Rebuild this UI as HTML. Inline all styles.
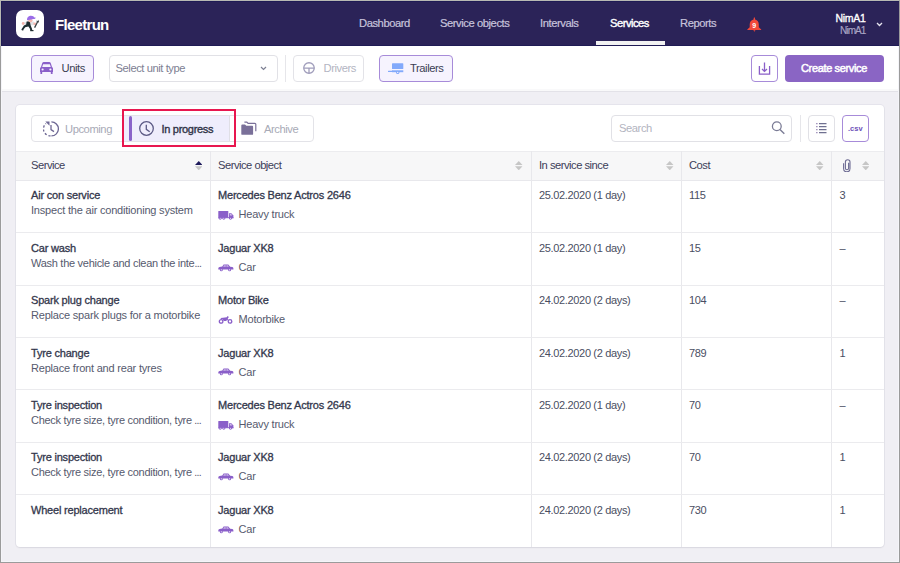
<!DOCTYPE html>
<html><head><meta charset="utf-8">
<style>
*{box-sizing:border-box;margin:0;padding:0}
html,body{width:900px;height:563px;overflow:hidden;background:#f0eff4;font-family:"Liberation Sans",sans-serif;color:#3a3d52}
#frame{position:absolute;left:0;top:0;width:900px;height:563px;border-top:1px solid #b8b9b3;border-left:1px solid #9b9b9b;border-right:1px solid #9b9b9b;border-bottom:1px solid #9b9b9b;z-index:50;pointer-events:none}
#frame2{position:absolute;left:1px;top:46px;width:898px;height:516px;border-left:1px solid #f5f5f9;border-right:1px solid #f5f5f9;border-bottom:1px solid #f5f5f9;z-index:49}
#frame3{position:absolute;left:0;top:0;width:1px;height:46px;background:#b8b8b2;z-index:51}
#hrim{position:absolute;left:1px;top:1px;width:898px;height:45px;border-top:1px solid #1f1b55;border-left:1px solid #1f1b55;border-bottom:1px solid #1f1b55;z-index:2}
.abs{position:absolute}
.t{position:absolute;white-space:nowrap;line-height:14px}
#hdr{position:absolute;left:0;top:0;width:900px;height:46px;background:#2b2358}
#logo{position:absolute;left:16px;top:10px;width:28px;height:28px;border-radius:7px;background:#fff}
#brand{left:55px;top:15.5px;font-size:15px;font-weight:bold;color:#fff;letter-spacing:-0.7px;line-height:18px}
.nav{top:15.8px;font-size:11.2px;color:#c8c3dc;letter-spacing:-0.43px;-webkit-text-stroke:0.2px #c8c3dc}
.nav.act{color:#fff;-webkit-text-stroke:0.4px #fff;letter-spacing:-0.5px}
#uline{position:absolute;left:596px;top:41px;width:69px;height:5px;background:#f2f2f2}
#bar{position:absolute;left:0;top:46px;width:900px;height:46px;background:#fff;border-bottom:1px solid #e3e2e8;box-shadow:inset 0 -2px 0 #f9f9fa}
.btn{position:absolute;height:27px;border:1px solid #e3e3e8;border-radius:4px;background:#fff}
.btn.on{border-color:#a78bd9;background:#f6f3fe}
.lbl{font-size:11.2px;letter-spacing:-0.43px}
#card{position:absolute;left:16px;top:105px;width:868px;height:442px;background:#fff;border-radius:4px;box-shadow:0 0 0 1px rgba(40,30,90,0.05),0 1px 2px rgba(0,0,0,0.06)}
#thead{position:absolute;left:16px;top:150.5px;width:868px;height:30px;background:#f7f7f8;border-top:1px solid #ececef;border-bottom:1px solid #e8e8ec}
.vline{position:absolute;width:1px;background:#e8e8ec}
.rowline{position:absolute;left:16px;width:868px;height:1px;background:#ebebee}
.th{font-size:11.2px;color:#3c4058;letter-spacing:-0.5px}
.nm{font-size:11px;color:#33374c;letter-spacing:-0.2px;-webkit-text-stroke:0.3px #33374c}
.ds{font-size:11px;color:#565a6e;letter-spacing:-0.2px}
.vl{font-size:11px;color:#4a4e62;letter-spacing:-0.34px}
.ico{position:absolute;line-height:0}
.el{letter-spacing:-0.6px;font-size:10.5px}
.sort{position:absolute;width:7.5px;height:9.5px}
</style></head>
<body>
<div id="frame"></div><div id="frame2"></div><div id="frame3"></div><div id="hrim"></div>
<!-- header -->
<div id="hdr">
  <div id="logo">
    <svg width="28" height="28" viewBox="0 0 28 28">
      <path d="M8.2 12.2L17.8 11.4 18.6 15 9.2 16z" fill="#e2e2e5"/>
      <path d="M10.6 11.6L13.8 11.2 14.6 15.2 15.9 18.4 16.3 20.3H14.3L13.8 18.4 12.4 16.6 9.2 17.2 7.3 19.8 5.6 19.3 7.9 15.6 10.2 14.6z" fill="#1f2d2f"/>
      <path d="M14.2 20h3.3v1.2h-3.3z" fill="#1f2d2f"/>
      <path d="M5.4 19l1.5-.3.7 1.6-1.6.3z" fill="#1f2d2f"/>
      <ellipse cx="14.4" cy="10.6" rx="2.2" ry="1.8" fill="#f4b6ad"/>
      <path d="M11 10.2C11 6.8 13.2 5.7 15 5.7 17 5.7 18 6.6 18.4 7.5L19.6 7.4C19.7 8.4 18.7 8.9 17.6 8.9L11.3 10.3z" fill="#9a6ce8"/>
      <circle cx="7.2" cy="13.5" r="1.4" fill="#f4b6ad"/>
      <circle cx="18.7" cy="13.8" r="1.4" fill="#f4b6ad"/>
      <path d="M18.6 17.6L21.4 12.3" stroke="#3a4244" stroke-width="1.3"/>
      <path d="M20.6 12.2L20.8 10.2 21.8 11.2 22.4 9.8 23 11.8 22 13z" fill="#3a4244"/>
    </svg>
  </div>
  <div class="t" id="brand">Fleetrun</div>
  <div class="t nav" style="left:359px">Dashboard</div>
  <div class="t nav" style="left:440px">Service objects</div>
  <div class="t nav" style="left:540px">Intervals</div>
  <div class="t nav act" style="left:610px">Services</div>
  <div class="t nav" style="left:680px">Reports</div>
  <div id="uline"></div>
  <div class="abs" style="left:747px;top:16.8px;width:15px;height:15px"><svg width="15" height="15" viewBox="0 0 15 15"><path d="M6.6 2.4Q6.6 .3 7.3 .3T8.1 2.4Q11.8 3.3 11.8 7.6V10.3L14.2 12.4V13H.3V12.4L2.7 10.3V7.6Q2.7 3.3 6.6 2.4z" fill="#f2483a"/><path d="M6.3 13.2h2.2L7.4 14.8z" fill="#f2483a"/><text x="7.3" y="11.2" font-family="Liberation Sans" font-size="7" font-weight="bold" fill="#fff" text-anchor="middle">9</text></svg></div>
  <div class="t" style="left:835.5px;top:11.2px;font-size:10.5px;color:#fff;letter-spacing:-0.3px;-webkit-text-stroke:0.35px #fff">NimA1</div>
  <div class="t" style="left:840px;top:23.8px;font-size:10px;color:#aaa6c4;letter-spacing:-0.9px;-webkit-text-stroke:0.15px #aaa6c4">NimA1</div>
  <svg class="abs" style="left:876px;top:22px" width="7" height="5" viewBox="0 0 7 5"><path d="M1 1l2.5 2.5L6 1" fill="none" stroke="#e6e4ef" stroke-width="1.3"/></svg>
</div>
<!-- toolbar -->
<div id="bar"></div>
<div class="btn on" style="left:31px;top:55px;width:63px"></div>
<svg class="abs" style="left:40px;top:62px" width="13" height="12" viewBox="0 0 13 12"><path d="M2.2 1.2Q2.6 0 3.8 0h5.4q1.2 0 1.6 1.2L12 5q1 .5 1 1.6V10H0V6.6Q0 5.5 1 5z" fill="#8a5fc9"/><path d="M2.2 5h8.6L9.9 2.2H3.1z" fill="#f4f1fd"/><circle cx="2.6" cy="7.5" r="1.1" fill="#f4f1fd"/><circle cx="10.4" cy="7.5" r="1.1" fill="#f4f1fd"/><rect x="0.4" y="9.5" width="1.8" height="2.5" rx=".5" fill="#8a5fc9"/><rect x="10.8" y="9.5" width="1.8" height="2.5" rx=".5" fill="#8a5fc9"/></svg>
<div class="t lbl" style="left:61.5px;top:61px;color:#3a3d52">Units</div>
<div class="btn" style="left:109px;top:55px;width:169px;border-color:#e1e1e6"></div>
<div class="t lbl" style="left:115.5px;top:61px;color:#7d8093">Select unit type</div>
<svg class="abs" style="left:260px;top:66px" width="7" height="5" viewBox="0 0 7 5"><path d="M1 1l2.5 2.5L6 1" fill="none" stroke="#7d8093" stroke-width="1.2"/></svg>
<div class="abs" style="left:285px;top:55px;width:1px;height:27px;background:#e6e6ea"></div>
<div class="btn" style="left:293px;top:55px;width:71px;border-color:#e3e3e8"></div>
<svg class="abs" style="left:302.5px;top:62.3px" width="12" height="12" viewBox="0 0 12 12"><circle cx="6" cy="6" r="5.25" fill="none" stroke="#a09dbb" stroke-width="1.3"/><path d="M0.8 6.2h10.4M6 6.2v5" fill="none" stroke="#a09dbb" stroke-width="1.3"/></svg>
<div class="t lbl" style="left:323.5px;top:61px;color:#b3b5c2">Drivers</div>
<div class="btn on" style="left:379px;top:55px;width:74px"></div>
<svg class="abs" style="left:387.5px;top:62.8px" width="16" height="12" viewBox="0 0 16 12"><rect x="4" y="0.2" width="11.3" height="5.8" rx=".6" fill="#82a9fb"/><path d="M4 7.3h11.3v1.9H4z" fill="#82a9fb"/><path d="M0.5 8.3h4" stroke="#82a9fb" stroke-width="1.2" stroke-linecap="round"/><circle cx="9.7" cy="9.4" r="1.7" fill="#82a9fb"/><circle cx="9.7" cy="9.4" r=".7" fill="#f6f3fe"/></svg>
<div class="t lbl" style="left:410px;top:61px;color:#3a3d52">Trailers</div>
<div class="btn" style="left:751px;top:55px;width:27px;border-color:#a78bd9"></div>
<svg class="abs" style="left:758px;top:62px" width="13" height="13" viewBox="0 0 13 13"><path d="M1.4 4v8.1h10.2V4" fill="none" stroke="#8a5fc8" stroke-width="1.3"/><path d="M6.5 0.5v9M4 7l2.5 2.4L9 7" fill="none" stroke="#8a5fc8" stroke-width="1.3"/></svg>
<div class="abs" style="left:785px;top:55px;width:99px;height:27px;border-radius:4px;background:#8a65c4"></div>
<div class="t" style="left:801px;top:61px;font-size:11px;color:#fff;letter-spacing:-0.35px;-webkit-text-stroke:0.5px #fff">Create service</div>

<!-- card -->
<div id="card"></div>
<!-- tabs -->
<div class="btn" style="left:31px;top:115px;width:283px;height:27px;border-color:#e3e3e8"></div>
<div class="abs" style="left:123px;top:116px;width:107px;height:25px;background:#efedfc;border-right:1px solid #e0dfe6"></div>
<div class="abs" style="left:128.5px;top:115.5px;width:3.3px;height:25px;border-radius:2px;background:#8a63c9"></div>
<div class="abs" style="left:122px;top:109px;width:114px;height:38px;border:2px solid #e8174f"></div>
<svg class="abs" style="left:42.5px;top:120.5px" width="16" height="16" viewBox="0 0 16 16"><path d="M8.4 0.9A7 7 0 0 1 8.4 14.9" fill="none" stroke="#6e6894" stroke-width="1.3"/><path d="M7.6 14.9A7 7 0 0 1 3 2.5" fill="none" stroke="#6e6894" stroke-width="1.3" stroke-dasharray="2.2 1.9"/><path d="M2.3 0.6h4.2v4.2z" fill="#6e6894"/><path d="M8 4v4.6l3 2" fill="none" stroke="#6e6894" stroke-width="1.3"/></svg>
<div class="t lbl" style="left:65px;top:121.5px;color:#a8aab6">Upcoming</div>
<svg class="abs" style="left:139px;top:120.5px" width="16" height="16" viewBox="0 0 16 16"><circle cx="7.5" cy="7.5" r="6.8" fill="none" stroke="#5c5a85" stroke-width="1.3"/><path d="M7.3 3.8v4.6l3.4 2.4" fill="none" stroke="#5c5a85" stroke-width="1.3"/></svg>
<div class="t" style="left:161.5px;top:121.5px;font-size:11px;color:#303347;letter-spacing:-0.3px;-webkit-text-stroke:0.35px #303347">In progress</div>
<svg class="abs" style="left:241px;top:121px" width="16" height="14" viewBox="0 0 16 14"><path d="M0.3 4.6Q0.3 3.5 1.3 3.5H4l1.3 1.3h5.9q.9 0 .9 1v7.1q0 .9-.9.9H1.3q-1 0-1-.9z" fill="#7a7099"/><path d="M3.4 1.1h2.4l1.3 1.3h6.8q.9 0 .9.9v7" fill="none" stroke="#7a7099" stroke-width="1.2"/></svg>
<div class="t lbl" style="left:264px;top:121.5px;color:#a8aab6">Archive</div>
<!-- search -->
<div class="btn" style="left:611px;top:115px;width:181px;border-color:#e1e1e6"></div>
<div class="t lbl" style="left:619px;top:121px;color:#b2b4c0">Search</div>
<svg class="abs" style="left:771px;top:121px" width="15" height="15" viewBox="0 0 15 15"><circle cx="5.8" cy="5.2" r="4.4" fill="none" stroke="#7a7b95" stroke-width="1.3"/><path d="M9 8.5l4.3 4.3" stroke="#7a7b95" stroke-width="1.4"/></svg>
<div class="abs" style="left:799.5px;top:115px;width:1px;height:27px;background:#e6e6ea"></div>
<div class="btn" style="left:808px;top:115px;width:27px;border-color:#e1e1e6"></div>
<svg class="abs" style="left:815px;top:121px" width="13" height="13" viewBox="0 0 13 13"><path d="M4 2.6h7.5M4 5.6h7.5M4 8.6h7.5M4 11.6h7.5" stroke="#6f7090" stroke-width="1.1"/><path d="M1.2 2.6h1.3M1.2 5.6h1.3M1.2 8.6h1.3M1.2 11.6h1.3" stroke="#8f7fb0" stroke-width="1.1"/></svg>
<div class="btn" style="left:842px;top:115px;width:27px;border-color:#a78bd9"></div>
<div class="t" style="left:848px;top:121.5px;font-size:7.5px;font-weight:bold;color:#6c4fb8;letter-spacing:0px">.csv</div>

<!-- table header -->
<div id="thead"></div>
<div class="vline" style="left:210px;top:151px;height:396px"></div>
<div class="vline" style="left:531px;top:151px;height:396px"></div>
<div class="vline" style="left:681px;top:151px;height:396px"></div>
<div class="vline" style="left:831px;top:151px;height:396px"></div>
<div class="t th" style="left:31px;top:157.7px">Service</div>
<div class="t th" style="left:218px;top:157.7px">Service object</div>
<div class="t th" style="left:539px;top:157.7px">In service since</div>
<div class="t th" style="left:689px;top:157.7px">Cost</div>
<svg class="abs" style="left:843px;top:159px" width="8" height="13" viewBox="0 0 8 13"><path d="M5.6 3.8v5.4a1.6 1.6 0 0 1-3.2 0V3a2.3 2.3 0 0 1 4.6 0v6.6a3.2 3.2 0 0 1-6.4 0V4.2" fill="none" stroke="#6d6b93" stroke-width="1.1"/></svg>
<svg class="sort" style="left:194.8px;top:160.8px" viewBox="0 0 7.5 9.5"><path d="M0 4L3.75 0 7.5 4z" fill="#1e1b5c"/><path d="M0 5.3h7.5L3.75 9.3z" fill="#c6c6c6"/></svg>
<svg class="sort" style="left:515px;top:160.8px" viewBox="0 0 7.5 9.5"><path d="M0 4L3.75 0 7.5 4z" fill="#c6c6c6"/><path d="M0 5.3h7.5L3.75 9.3z" fill="#c6c6c6"/></svg>
<svg class="sort" style="left:666.3px;top:160.8px" viewBox="0 0 7.5 9.5"><path d="M0 4L3.75 0 7.5 4z" fill="#c6c6c6"/><path d="M0 5.3h7.5L3.75 9.3z" fill="#c6c6c6"/></svg>
<svg class="sort" style="left:816px;top:160.8px" viewBox="0 0 7.5 9.5"><path d="M0 4L3.75 0 7.5 4z" fill="#c6c6c6"/><path d="M0 5.3h7.5L3.75 9.3z" fill="#c6c6c6"/></svg>
<svg class="sort" style="left:861.5px;top:160.8px" viewBox="0 0 7.5 9.5"><path d="M0 4L3.75 0 7.5 4z" fill="#c6c6c6"/><path d="M0 5.3h7.5L3.75 9.3z" fill="#c6c6c6"/></svg>

<div class="rowline" style="top:232.1px"></div>
<div class="t nm" style="left:31px;top:188.3px">Air con service</div>
<div class="t ds" style="left:31px;top:203.3px">Inspect the air conditioning system</div>
<div class="t nm" style="left:218px;top:188.3px">Mercedes Benz Actros 2646</div>
<div class="ico" style="left:218px;top:211.1px"><svg width="16" height="9" viewBox="0 0 16 9"><rect x="0.3" y="0" width="10" height="6.8" rx=".5" fill="#8a5fc9"/><path d="M11 2.2h2.4l2 2.3V7.3H11z" fill="#8a5fc9"/><path d="M11.8 3h1.3l1.3 1.5h-2.6z" fill="#fff" opacity=".6"/><rect x="0.3" y="6.2" width="15.1" height="1" fill="#8a5fc9"/><circle cx="2.2" cy="7.3" r="1.4" fill="#8a5fc9"/><circle cx="2.2" cy="7.3" r=".5" fill="#fff"/><circle cx="5.8" cy="7.3" r="1.4" fill="#8a5fc9"/><circle cx="5.8" cy="7.3" r=".5" fill="#fff"/><circle cx="12.5" cy="7.3" r="1.4" fill="#8a5fc9"/><circle cx="12.5" cy="7.3" r=".5" fill="#fff"/></svg></div>
<div class="t ds" style="left:238.5px;top:207.3px">Heavy truck</div>
<div class="t vl" style="left:539px;top:188.3px">25.02.2020 (1 day)</div>
<div class="t vl" style="left:689px;top:188.3px">115</div>
<div class="t vl" style="left:839.5px;top:188.3px">3</div>
<div class="rowline" style="top:284.5px"></div>
<div class="t nm" style="left:31px;top:240.7px">Car wash</div>
<div class="t ds" style="left:31px;top:255.7px;letter-spacing:-0.28px">Wash the vehicle and clean the inte<span class="el">...</span></div>
<div class="t nm" style="left:218px;top:240.7px">Jaguar XK8</div>
<div class="ico" style="left:218px;top:263.5px"><svg width="16" height="8" viewBox="0 0 16 8"><path d="M0.3 4.4Q0.3 3.4 1.6 3.1L4.3 2.6 5.6 0.4H10.3L12.2 2.7 14.3 3.1Q15.4 3.4 15.4 4.4V5.6H0.3z" fill="#8a5fc9"/><path d="M6 1.2h1.8v1.5H5.2z M8.4 1.2h1.5l1 1.5H8.4z" fill="#fff" opacity=".55"/><circle cx="3.3" cy="5.8" r="1.5" fill="#8a5fc9"/><circle cx="3.3" cy="5.8" r=".6" fill="#fff"/><circle cx="11.6" cy="5.8" r="1.5" fill="#8a5fc9"/><circle cx="11.6" cy="5.8" r=".6" fill="#fff"/></svg></div>
<div class="t ds" style="left:238.5px;top:259.7px">Car</div>
<div class="t vl" style="left:539px;top:240.7px">25.02.2020 (1 day)</div>
<div class="t vl" style="left:689px;top:240.7px">15</div>
<div class="t vl" style="left:839.5px;top:240.7px">–</div>
<div class="rowline" style="top:336.9px"></div>
<div class="t nm" style="left:31px;top:293.1px">Spark plug change</div>
<div class="t ds" style="left:31px;top:308.1px">Replace spark plugs for a motorbike</div>
<div class="t nm" style="left:218px;top:293.1px">Motor Bike</div>
<div class="ico" style="left:218px;top:315.9px"><svg width="15" height="8" viewBox="0 0 15 8"><circle cx="3.1" cy="5.4" r="1.8" fill="none" stroke="#8a5fc9" stroke-width="1.3"/><circle cx="12" cy="5.4" r="1.8" fill="none" stroke="#8a5fc9" stroke-width="1.3"/><path d="M2.6 1.9L5 1.8 8.8 1.3 9.6 0.1 10.9 0.9 9.7 2.6 10.8 4.3 10 4.8 9 3.5 8.4 5H5.8L4.4 3.2 2.8 2.8z" fill="#8a5fc9"/></svg></div>
<div class="t ds" style="left:238.5px;top:312.1px">Motorbike</div>
<div class="t vl" style="left:539px;top:293.1px">24.02.2020 (2 days)</div>
<div class="t vl" style="left:689px;top:293.1px">104</div>
<div class="t vl" style="left:839.5px;top:293.1px">–</div>
<div class="rowline" style="top:389.3px"></div>
<div class="t nm" style="left:31px;top:345.5px">Tyre change</div>
<div class="t ds" style="left:31px;top:360.5px">Replace front and rear tyres</div>
<div class="t nm" style="left:218px;top:345.5px">Jaguar XK8</div>
<div class="ico" style="left:218px;top:368.3px"><svg width="16" height="8" viewBox="0 0 16 8"><path d="M0.3 4.4Q0.3 3.4 1.6 3.1L4.3 2.6 5.6 0.4H10.3L12.2 2.7 14.3 3.1Q15.4 3.4 15.4 4.4V5.6H0.3z" fill="#8a5fc9"/><path d="M6 1.2h1.8v1.5H5.2z M8.4 1.2h1.5l1 1.5H8.4z" fill="#fff" opacity=".55"/><circle cx="3.3" cy="5.8" r="1.5" fill="#8a5fc9"/><circle cx="3.3" cy="5.8" r=".6" fill="#fff"/><circle cx="11.6" cy="5.8" r="1.5" fill="#8a5fc9"/><circle cx="11.6" cy="5.8" r=".6" fill="#fff"/></svg></div>
<div class="t ds" style="left:238.5px;top:364.5px">Car</div>
<div class="t vl" style="left:539px;top:345.5px">24.02.2020 (2 days)</div>
<div class="t vl" style="left:689px;top:345.5px">789</div>
<div class="t vl" style="left:839.5px;top:345.5px">1</div>
<div class="rowline" style="top:441.7px"></div>
<div class="t nm" style="left:31px;top:397.9px">Tyre inspection</div>
<div class="t ds" style="left:31px;top:412.9px;letter-spacing:-0.28px">Check tyre size, tyre condition, tyre<span class="el"> ...</span></div>
<div class="t nm" style="left:218px;top:397.9px">Mercedes Benz Actros 2646</div>
<div class="ico" style="left:218px;top:420.7px"><svg width="16" height="9" viewBox="0 0 16 9"><rect x="0.3" y="0" width="10" height="6.8" rx=".5" fill="#8a5fc9"/><path d="M11 2.2h2.4l2 2.3V7.3H11z" fill="#8a5fc9"/><path d="M11.8 3h1.3l1.3 1.5h-2.6z" fill="#fff" opacity=".6"/><rect x="0.3" y="6.2" width="15.1" height="1" fill="#8a5fc9"/><circle cx="2.2" cy="7.3" r="1.4" fill="#8a5fc9"/><circle cx="2.2" cy="7.3" r=".5" fill="#fff"/><circle cx="5.8" cy="7.3" r="1.4" fill="#8a5fc9"/><circle cx="5.8" cy="7.3" r=".5" fill="#fff"/><circle cx="12.5" cy="7.3" r="1.4" fill="#8a5fc9"/><circle cx="12.5" cy="7.3" r=".5" fill="#fff"/></svg></div>
<div class="t ds" style="left:238.5px;top:416.9px">Heavy truck</div>
<div class="t vl" style="left:539px;top:397.9px">25.02.2020 (1 day)</div>
<div class="t vl" style="left:689px;top:397.9px">70</div>
<div class="t vl" style="left:839.5px;top:397.9px">–</div>
<div class="rowline" style="top:494.1px"></div>
<div class="t nm" style="left:31px;top:450.3px">Tyre inspection</div>
<div class="t ds" style="left:31px;top:465.3px;letter-spacing:-0.28px">Check tyre size, tyre condition, tyre<span class="el"> ...</span></div>
<div class="t nm" style="left:218px;top:450.3px">Jaguar XK8</div>
<div class="ico" style="left:218px;top:473.1px"><svg width="16" height="8" viewBox="0 0 16 8"><path d="M0.3 4.4Q0.3 3.4 1.6 3.1L4.3 2.6 5.6 0.4H10.3L12.2 2.7 14.3 3.1Q15.4 3.4 15.4 4.4V5.6H0.3z" fill="#8a5fc9"/><path d="M6 1.2h1.8v1.5H5.2z M8.4 1.2h1.5l1 1.5H8.4z" fill="#fff" opacity=".55"/><circle cx="3.3" cy="5.8" r="1.5" fill="#8a5fc9"/><circle cx="3.3" cy="5.8" r=".6" fill="#fff"/><circle cx="11.6" cy="5.8" r="1.5" fill="#8a5fc9"/><circle cx="11.6" cy="5.8" r=".6" fill="#fff"/></svg></div>
<div class="t ds" style="left:238.5px;top:469.3px">Car</div>
<div class="t vl" style="left:539px;top:450.3px">24.02.2020 (2 days)</div>
<div class="t vl" style="left:689px;top:450.3px">70</div>
<div class="t vl" style="left:839.5px;top:450.3px">1</div>
<div class="t nm" style="left:31px;top:502.7px">Wheel replacement</div>
<div class="t nm" style="left:218px;top:502.7px">Jaguar XK8</div>
<div class="ico" style="left:218px;top:525.5px"><svg width="16" height="8" viewBox="0 0 16 8"><path d="M0.3 4.4Q0.3 3.4 1.6 3.1L4.3 2.6 5.6 0.4H10.3L12.2 2.7 14.3 3.1Q15.4 3.4 15.4 4.4V5.6H0.3z" fill="#8a5fc9"/><path d="M6 1.2h1.8v1.5H5.2z M8.4 1.2h1.5l1 1.5H8.4z" fill="#fff" opacity=".55"/><circle cx="3.3" cy="5.8" r="1.5" fill="#8a5fc9"/><circle cx="3.3" cy="5.8" r=".6" fill="#fff"/><circle cx="11.6" cy="5.8" r="1.5" fill="#8a5fc9"/><circle cx="11.6" cy="5.8" r=".6" fill="#fff"/></svg></div>
<div class="t ds" style="left:238.5px;top:521.7px">Car</div>
<div class="t vl" style="left:539px;top:502.7px">24.02.2020 (2 days)</div>
<div class="t vl" style="left:689px;top:502.7px">730</div>
<div class="t vl" style="left:839.5px;top:502.7px">1</div>
</body></html>
